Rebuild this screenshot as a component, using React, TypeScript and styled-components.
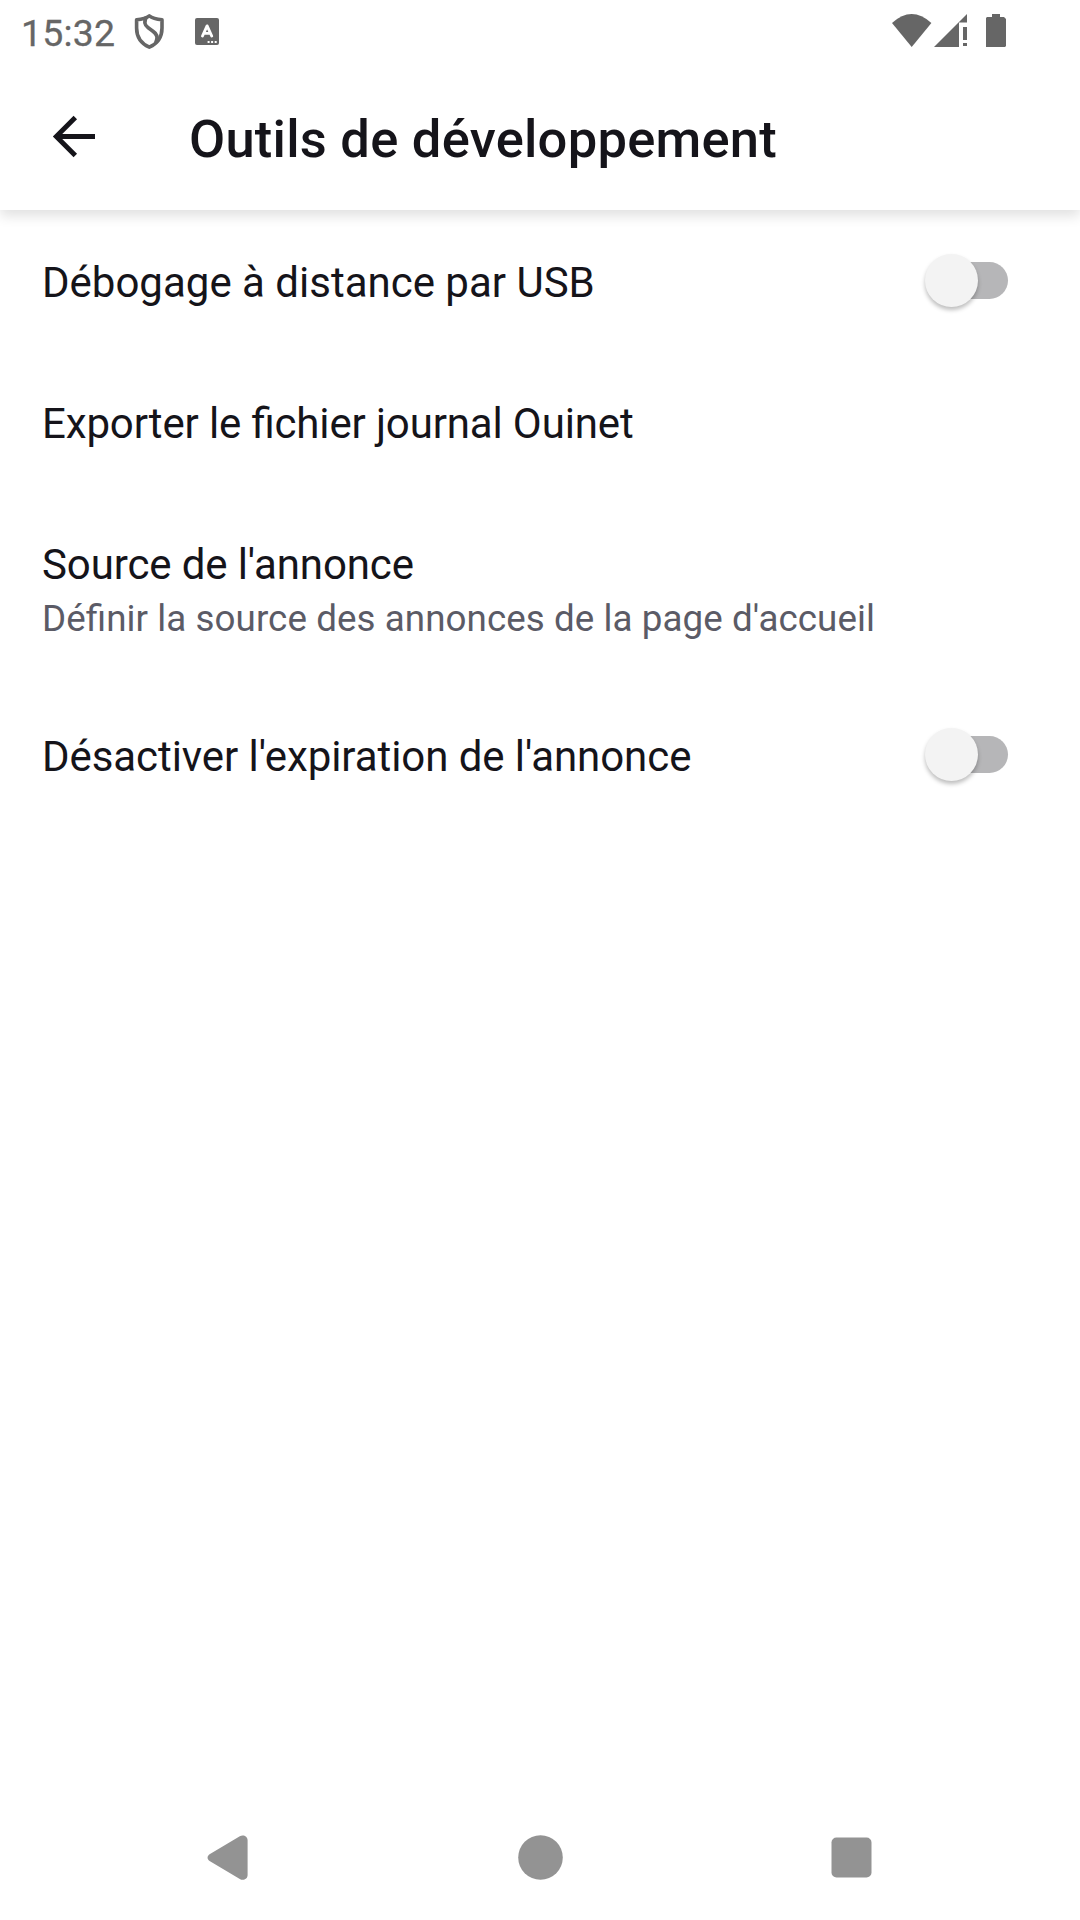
import React from "react";
import styled, { createGlobalStyle } from "styled-components";

const GlobalStyle = createGlobalStyle`
  * { box-sizing: border-box; }
  body { margin: 0; background: #fff; }
`;

const Screen = styled.div`
  width: 1080px;
  height: 1920px;
  display: flex;
  flex-direction: column;
  overflow: hidden;
  background: #fff;
  color: #15141a;
  font-family: Roboto, "Noto Sans", sans-serif;
  font-feature-settings: "liga" 1;
`;

const TopArea = styled.header`
  flex: none;
  height: 210px;
  background: #fff;
  box-shadow: 0 6px 12px rgba(0, 0, 0, 0.12);
`;

const StatusBar = styled.div`
  height: 63px;
  display: flex;
  align-items: flex-start;
  justify-content: space-between;
  padding: 0 72px 0 21px;
  color: #666;
`;

const StatusGroup = styled.div`
  display: flex;
  align-items: flex-start;
`;

const Clock = styled.time`
  width: 113px;
  padding-top: 11px;
  font-size: 37.4px;
  letter-spacing: 0.2px;
  line-height: 44px;
  -webkit-text-stroke: 0.3px currentColor;
`;

const StatusIcon = styled.svg<{ $gap?: number; $top?: number }>`
  display: block;
  flex: none;
  margin-left: ${(p) => p.$gap ?? 0}px;
  margin-top: ${(p) => p.$top ?? 0}px;
  fill: currentColor;
`;

const Toolbar = styled.div`
  height: 147px;
  display: flex;
  align-items: center;
  padding-left: 42px;
`;

const BackButton = styled.button`
  width: 63px;
  height: 63px;
  margin: 0 84px 0 0;
  padding: 0;
  border: 0;
  background: none;
  color: inherit;

  svg {
    display: block;
  }
`;

const Title = styled.h1`
  margin: 4px 0 0;
  font-size: 52.5px;
  font-weight: 500;
  letter-spacing: 0.24px;
  line-height: 62px;
  white-space: nowrap;
`;

const List = styled.main`
  flex: 1;
`;

const Row = styled.div`
  display: flex;
  align-items: center;
  justify-content: space-between;
  min-height: 141px;
  padding: 0 71px 0 42px;
`;

const RowText = styled.div`
  padding: 44px 0 40px;
  white-space: nowrap;
`;

const RowTitle = styled.div<{ $tracking?: number }>`
  font-size: 42px;
  line-height: 57px;
  letter-spacing: ${(p) => p.$tracking ?? 0}px;
`;

const RowSummary = styled.div`
  font-size: 36.75px;
  line-height: 51px;
  letter-spacing: 0.07px;
  color: #5b5b66;
`;

const Switch = styled.button`
  display: flex;
  align-items: center;
  width: 84px;
  height: 54px;
  margin: 0;
  padding: 0;
  border: 0;
  background: none;
`;

const Thumb = styled.span`
  z-index: 1;
  flex: none;
  width: 53px;
  height: 53px;
  margin-right: -46px;
  border-radius: 50%;
  background: #f3f3f3;
  box-shadow: 0 3px 4px rgba(0, 0, 0, 0.26);
`;

const Track = styled.span`
  flex: none;
  width: 76px;
  height: 37px;
  border-radius: 19px;
  background: #b6b6b8;
`;

const NavBar = styled.nav`
  flex: none;
  height: 126px;
  display: flex;
  align-items: center;
  justify-content: center;
  gap: 248px;
  color: #939393;

  svg {
    display: block;
    fill: currentColor;
  }
`;

type Item = { title: string; tracking?: number; summary?: string; toggle?: boolean };

const items: Item[] = [
  { title: "Débogage à distance par USB", toggle: true },
  { title: "Exporter le fichier journal Ouinet", tracking: -0.14 },
  {
    title: "Source de l'annonce",
    tracking: -0.12,
    summary: "Définir la source des annonces de la page d'accueil",
  },
  { title: "Désactiver l'expiration de l'annonce", tracking: -0.07, toggle: true },
];

export default function App() {
  return (
    <Screen>
      <GlobalStyle />
      <TopArea>
        <StatusBar>
          <StatusGroup>
            <Clock>15:32</Clock>
            <StatusIcon width="32" height="38" viewBox="0 0 32 38" $top={12}>
              <path
                d="M15.3 3.8 C12.2 6.2 6.6 7.3 2.6 7.7 V16 C2.6 25.2 7.5 31.7 15.3 35.2 C23.1 31.7 28 25.2 28 16 V7.7 C24 7.3 18.4 6.2 15.3 3.8 Z"
                fill="none"
                stroke="currentColor"
                strokeWidth="3.6"
                strokeLinejoin="round"
              />
              <path
                d="M12.5 5 C10 9 10.2 12.8 14.2 15.8 C19 19.3 23.4 21.3 23 26 Q22.8 28.6 21.6 30.5"
                fill="none"
                stroke="currentColor"
                strokeWidth="3.6"
              />
            </StatusIcon>
            <StatusIcon width="24" height="27" viewBox="0 0 24 27" $gap={29} $top={18}>
              <path d="M2 0H22A2 2 0 0 1 24 2V25A2 2 0 0 1 22 27H2A2 2 0 0 1 0 25V2A2 2 0 0 1 2 0Z" />
              <path
                d="M7.5 18 L12.1 7.9 L16.7 18 M9 15.4 H15"
                fill="none"
                stroke="#fff"
                strokeWidth="2.9"
                strokeLinecap="round"
                strokeLinejoin="round"
              />
              <path d="M12.6 23h2v2h-2zM16.1 23h2v2h-2zM19.7 23h2v2h-2z" fill="#fff" />
            </StatusIcon>
          </StatusGroup>
          <StatusGroup>
            <StatusIcon width="40" height="33" viewBox="0 0 40 33" $top={14}>
              <path d="M0 9 Q19.7 -9 39.4 9 L19.7 33 Z" />
            </StatusIcon>
            <StatusIcon width="33" height="33" viewBox="0 0 33 33" $gap={2} $top={14}>
              <path d="M0 33 L33 0 V8.5 H25 V33 Z" />
              <path d="M29 13h4v13h-4zM29 29h4v3h-4z" />
            </StatusIcon>
            <StatusIcon width="20" height="33" viewBox="0 0 20 33" $gap={19} $top={14}>
              <path d="M6 0H14V3H18L20 5V32L19 33H0V4L1 3H6Z" />
            </StatusIcon>
            <StatusIcon width="2" height="33" viewBox="0 0 2 33" />
          </StatusGroup>
        </StatusBar>
        <Toolbar>
          <BackButton aria-label="Retour">
            <svg width="63" height="63" viewBox="0 0 63 63">
              <path
                d="M53 31.5H14 M33.3 12.5 L14.3 31.5 L33.3 50.5"
                fill="none"
                stroke="currentColor"
                strokeWidth="4.9"
              />
            </svg>
          </BackButton>
          <Title>Outils de développement</Title>
        </Toolbar>
      </TopArea>
      <List>
        {items.map((item) => (
          <Row key={item.title}>
            <RowText>
              <RowTitle $tracking={item.tracking}>{item.title}</RowTitle>
              {item.summary && <RowSummary>{item.summary}</RowSummary>}
            </RowText>
            {item.toggle && (
              <Switch role="switch" aria-checked={false} aria-label={item.title}>
                <Thumb />
                <Track />
              </Switch>
            )}
          </Row>
        ))}
      </List>
      <NavBar>
        <svg width="63" height="63" viewBox="0 0 63 63">
          <path d="M41.8 10.3 C45 8.3 49.6 10 49.6 14.3 V49 C49.6 53.3 45 55 41.8 53 L12 35.3 C8.8 33.4 8.8 29.8 12 28 Z" />
        </svg>
        <svg width="63" height="63" viewBox="0 0 63 63">
          <circle cx="31.5" cy="31.5" r="22.3" />
        </svg>
        <svg width="63" height="63" viewBox="0 0 63 63">
          <rect x="11.5" y="11.5" width="40" height="40" rx="5" />
        </svg>
      </NavBar>
    </Screen>
  );
}
